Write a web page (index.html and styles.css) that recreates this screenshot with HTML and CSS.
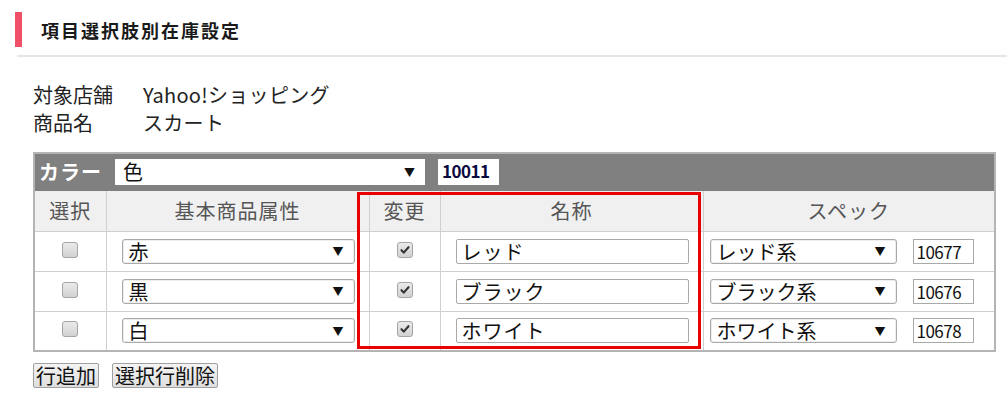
FILE: index.html
```html
<!DOCTYPE html>
<html lang="ja">
<head>
<meta charset="utf-8">
<link rel="stylesheet" href="styles.css">
</head>
<body>
<header class="page-head">
  <span class="mark"></span>
  <h1 class="title">項目選択肢別在庫設定</h1>
</header>
<div class="divider"></div>
<main class="content">
  <dl class="info">
    <div class="info-row"><dt>対象店舗</dt><dd>Yahoo!ショッピング</dd></div>
    <div class="info-row"><dt>商品名</dt><dd>スカート</dd></div>
  </dl>
  <div class="table-wrap">
    <table class="grid">
      <colgroup>
        <col class="c1"><col class="c2"><col class="c3"><col class="c4"><col class="c5">
      </colgroup>
      <tr class="group-row">
        <td colspan="5">
          <div class="group">
            <span class="group-label">カラー</span>
            <div class="select plain wide"><span>色</span><span class="arrow">▼</span></div>
            <span class="num group-num">10011</span>
          </div>
        </td>
      </tr>
      <tr class="head-row">
        <th>選択</th><th>基本商品属性</th><th>変更</th><th>名称</th><th>スペック</th>
      </tr>
      <tr>
        <td class="center"><span class="cb"></span></td>
        <td class="pad"><div class="select"><span>赤</span><span class="arrow">▼</span></div></td>
        <td class="center"><span class="cb on"><svg viewBox="0 0 16 16"><path d="M4 8.2l2.6 2.8L12 4.8" /></svg></span></td>
        <td class="pad"><div class="text">レッド</div></td>
        <td class="spec"><div class="spec-box"><div class="select short"><span>レッド系</span><span class="arrow">▼</span></div><span class="num">10677</span></div></td>
      </tr>
      <tr>
        <td class="center"><span class="cb"></span></td>
        <td class="pad"><div class="select"><span>黒</span><span class="arrow">▼</span></div></td>
        <td class="center"><span class="cb on"><svg viewBox="0 0 16 16"><path d="M4 8.2l2.6 2.8L12 4.8" /></svg></span></td>
        <td class="pad"><div class="text">ブラック</div></td>
        <td class="spec"><div class="spec-box"><div class="select short"><span>ブラック系</span><span class="arrow">▼</span></div><span class="num">10676</span></div></td>
      </tr>
      <tr>
        <td class="center"><span class="cb"></span></td>
        <td class="pad"><div class="select"><span>白</span><span class="arrow">▼</span></div></td>
        <td class="center"><span class="cb on"><svg viewBox="0 0 16 16"><path d="M4 8.2l2.6 2.8L12 4.8" /></svg></span></td>
        <td class="pad"><div class="text">ホワイト</div></td>
        <td class="spec"><div class="spec-box"><div class="select short"><span>ホワイト系</span><span class="arrow">▼</span></div><span class="num">10678</span></div></td>
      </tr>
    </table>
    <div class="highlight"></div>
  </div>
  <div class="actions">
    <button class="btn">行追加</button>
    <button class="btn">選択行削除</button>
  </div>
</main>
</body>
</html>
```

FILE: styles.css
```css
* { box-sizing: border-box; }
body {
  margin: 0;
  background: #fff;
  font-family: "Noto Sans CJK JP", "Noto Sans", sans-serif;
  color: #222;
}
.page-head {
  display: flex;
  align-items: center;
  height: 35px;
  margin-top: 12px;
  padding-left: 15px;
}
.mark {
  width: 7px;
  height: 35px;
  background: #ef5068;
}
.title {
  margin: 0 0 0 19px;
  font-size: 18px;
  font-weight: bold;
  color: #1a1a1a;
  letter-spacing: 2px;
}
.divider {
  margin: 8px 0 0 17px;
  height: 2px;
  background: #e6e6e6;
}
.content {
  padding-left: 33px;
  width: 994px;
}
.info {
  margin: 24px 0 0 0;
  font-size: 20px;
  line-height: 28px;
  color: #222;
}
.info-row { display: flex; }
.info dt { width: 110px; }
.info dd { margin: 0; letter-spacing: 0.3px; }
.table-wrap {
  position: relative;
  margin-top: 15px;
  width: 961px;
}
.grid {
  width: 961px;
  border-collapse: collapse;
  table-layout: fixed;
  border: 2px solid #b4b4b4;
}
.c1 { width: 72px; }
.c2 { width: 263px; }
.c3 { width: 71px; }
.c4 { width: 263px; }
.c5 { width: 292px; }
.grid td, .grid th {
  border: 1px solid #cfcfcf;
  padding: 0;
}
.group-row td {
  background: #808080;
  height: 37px;
  border-color: #808080;
}
.group {
  display: flex;
  align-items: center;
  padding-left: 4px;
}
.group-label {
  width: 76px;
  color: #fff;
  font-size: 20px;
  font-weight: bold;
  letter-spacing: 1px;
}
.head-row th {
  height: 41px;
  background: #f0f0f0;
  color: #555;
  font-size: 20px;
  font-weight: normal;
  letter-spacing: 1px;
}
.grid tr td { height: 40px; }
.grid .group-row td { height: 37px; }
.center { text-align: center; }
.pad { padding: 0 14px 0 15px !important; }
.spec { padding-left: 6px !important; }
.spec-box {
  display: flex;
  align-items: center;
  gap: 16px;
}
.select {
  display: flex;
  align-items: center;
  justify-content: space-between;
  height: 25px;
  padding: 0 10px 0 6px;
  border: 1px solid #a9a9a9;
  border-radius: 3px;
  background: #fff;
  box-shadow: inset 0 0 0 1px #eee;
  font-size: 20px;
  color: #111;
}
.select.plain {
  border: none;
  box-shadow: none;
  border-radius: 0;
  height: 26px;
  padding-left: 8px;
}
.select.wide { width: 310px; }
.select.short { width: 187px; }
.arrow {
  font-size: 11px;
  color: #111;
}
.text {
  height: 25px;
  border: 1px solid #a9a9a9;
  border-radius: 2px;
  padding: 0 5px;
  font-size: 20px;
  line-height: 23px;
  color: #111;
  letter-spacing: 1px;
}
.num {
  display: inline-block;
  width: 61px;
  height: 25px;
  border: 1px solid #a9a9a9;
  background: #fff;
  padding-left: 3px;
  font-size: 17px;
  line-height: 23px;
  color: #111;
  letter-spacing: -0.5px;
}
.group-num {
  margin-left: 13px;
  height: 26px;
  border: none;
  color: #0a0a40;
  font-weight: bold;
  padding-left: 4px;
}
.cb {
  display: inline-flex;
  align-items: center;
  justify-content: center;
  width: 16px;
  height: 16px;
  border: 1px solid #a5a5a5;
  border-radius: 3px;
  background: linear-gradient(#eaeaea, #d2d2d2);
  vertical-align: middle;
  margin-top: -8px;
}
.cb svg {
  width: 14px;
  height: 14px;
}
.cb path {
  fill: none;
  stroke: #333;
  stroke-width: 2.4;
  stroke-linecap: round;
  stroke-linejoin: round;
}
.highlight {
  position: absolute;
  left: 324px;
  top: 40px;
  width: 344px;
  height: 157px;
  border: 3px solid #e60000;
  pointer-events: none;
}
.actions {
  display: flex;
  gap: 13px;
  margin-top: 11px;
}
.btn {
  height: 25px;
  padding: 0 2px;
  border: 1px solid #a0a0a0;
  border-radius: 2px;
  background: linear-gradient(#f4f4f4, #dedede);
  font-family: "Noto Sans CJK JP", "Noto Sans", sans-serif;
  font-size: 20px;
  line-height: 22px;
  color: #111;
}
```
